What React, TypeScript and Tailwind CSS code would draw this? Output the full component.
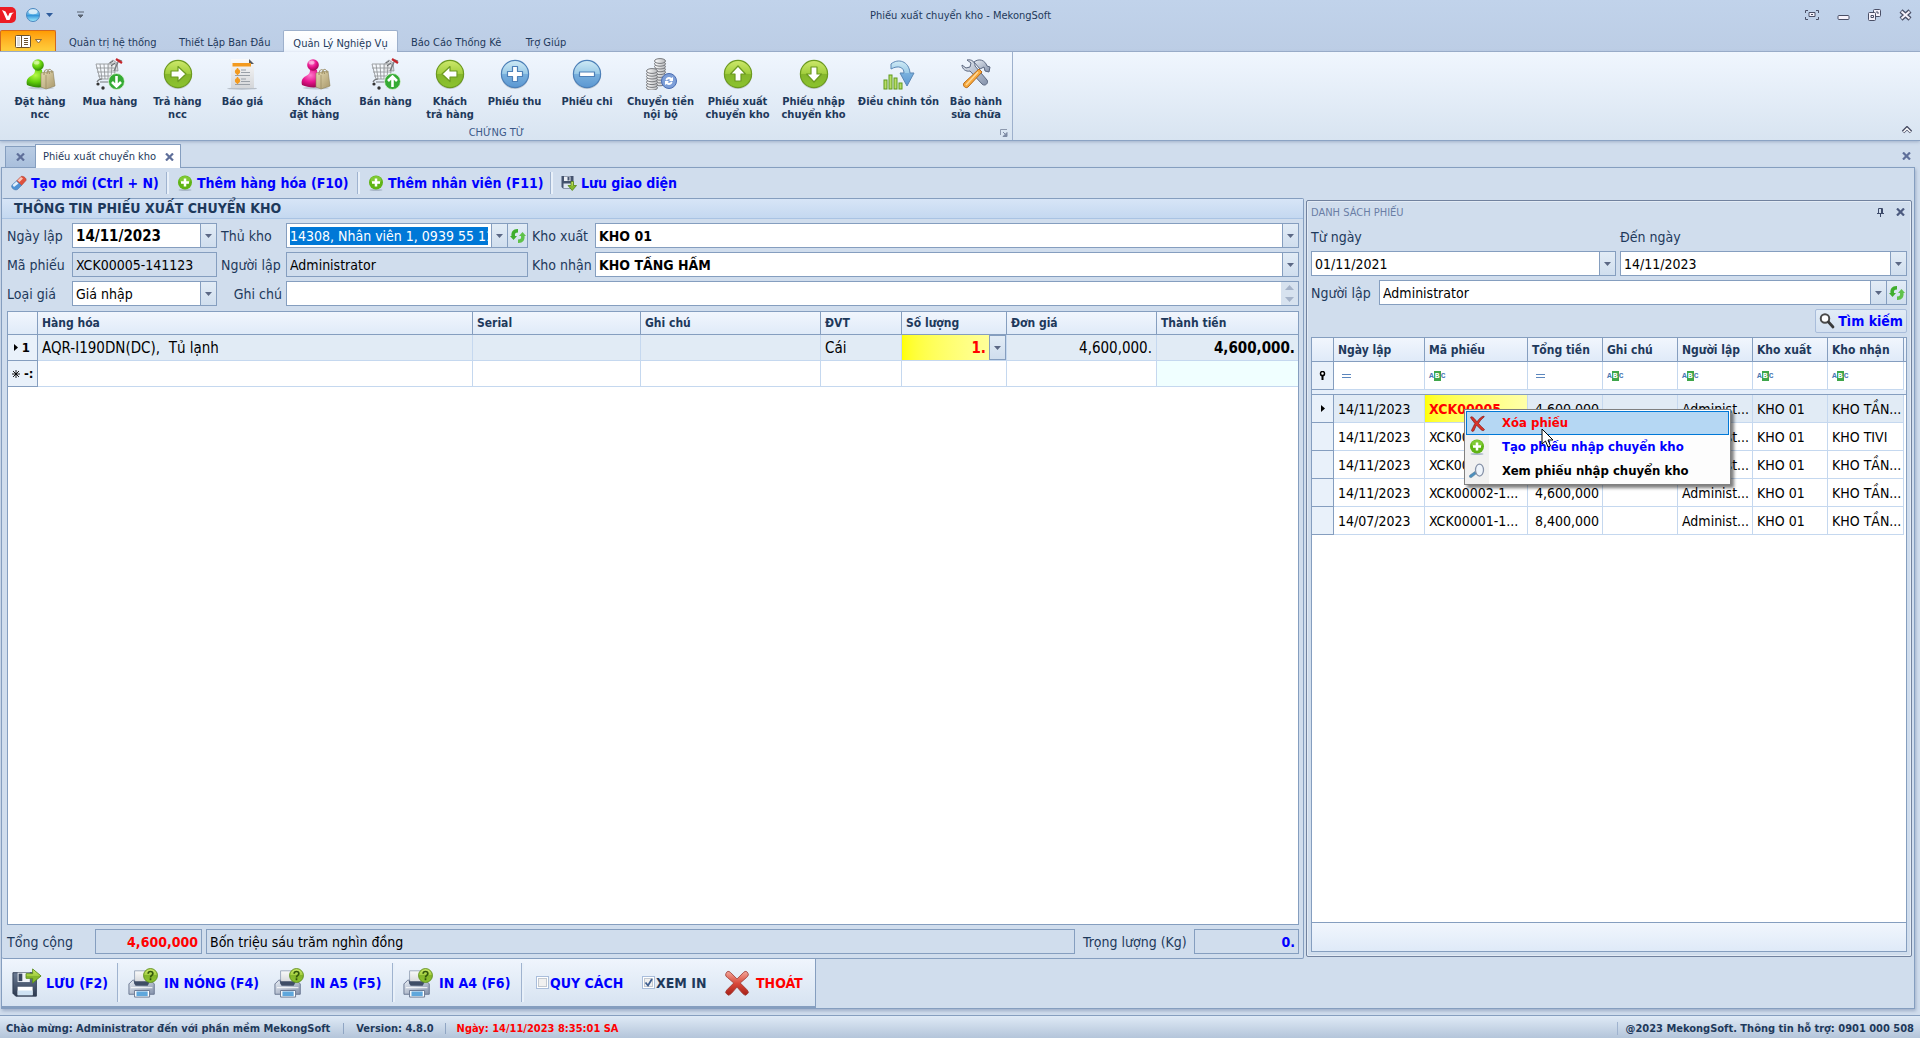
import type { ReactNode } from 'react';

const small = 'text-[11px] leading-[13px]';

function Defs() {
  return (
    <svg className="absolute h-0 w-0" aria-hidden="true">
      <defs>
        <linearGradient id="green" x1="0" y1="0" x2="0" y2="1">
          <stop offset="0" stopColor="#cde86b" /><stop offset=".48" stopColor="#a3cf3f" />
          <stop offset=".5" stopColor="#84b52b" /><stop offset="1" stopColor="#8cc42e" />
        </linearGradient>
        <linearGradient id="blue" x1="0" y1="0" x2="0" y2="1">
          <stop offset="0" stopColor="#cfeaf5" /><stop offset=".48" stopColor="#9bcbe8" />
          <stop offset=".5" stopColor="#79b0dd" /><stop offset="1" stopColor="#5b97d2" />
        </linearGradient>
        <radialGradient id="lime" cx=".4" cy=".3" r=".8">
          <stop offset="0" stopColor="#b9f94a" /><stop offset=".5" stopColor="#62cf0c" /><stop offset="1" stopColor="#1f6d05" />
        </radialGradient>
        <radialGradient id="pink" cx=".4" cy=".3" r=".8">
          <stop offset="0" stopColor="#ff7ccb" /><stop offset=".5" stopColor="#e6128c" /><stop offset="1" stopColor="#86043f" />
        </radialGradient>
        <linearGradient id="bag" x1="0" y1="0" x2="1" y2="1">
          <stop offset="0" stopColor="#e6dcb4" /><stop offset="1" stopColor="#a8976a" />
        </linearGradient>
        <linearGradient id="ball" x1="0" y1="0" x2="0" y2="1">
          <stop offset="0" stopColor="#9cc9ea" /><stop offset=".45" stopColor="#5fb4e6" />
          <stop offset=".5" stopColor="#2d8fd8" /><stop offset="1" stopColor="#a6f0ff" />
        </linearGradient>
        <linearGradient id="steel" x1="0" y1="0" x2="1" y2="1">
          <stop offset="0" stopColor="#e8edf4" /><stop offset="1" stopColor="#8492ab" />
        </linearGradient>
        <linearGradient id="dark" x1="0" y1="0" x2="0" y2="1">
          <stop offset="0" stopColor="#6c7c95" /><stop offset="1" stopColor="#2d3a50" />
        </linearGradient>
        <linearGradient id="coin" x1="0" y1="0" x2="1" y2="0">
          <stop offset="0" stopColor="#fff" /><stop offset="1" stopColor="#b7b9bc" />
        </linearGradient>
        <linearGradient id="red" x1="0" y1="0" x2="0" y2="1">
          <stop offset="0" stopColor="#f3a79b" /><stop offset=".5" stopColor="#d9493a" /><stop offset="1" stopColor="#a82018" />
        </linearGradient>
        <linearGradient id="paper" x1="0" y1="0" x2="0" y2="1">
          <stop offset="0" stopColor="#fafafa" /><stop offset="1" stopColor="#d4d6d9" />
        </linearGradient>
      </defs>
    </svg>
  );
}

function Svg({ size = 32, children }: { size?: number; children: ReactNode }) {
  return <svg width={size} height={size} viewBox="0 0 32 32" className="shrink-0" aria-hidden="true">{children}</svg>;
}

function PersonBag({ fill }: { fill: string }) {
  return (
    <Svg>
      <ellipse cx="17" cy="30" rx="13" ry="1.500" fill="#8c96a3" opacity=".4" />
      <path d="M3 27c-1-4 0-7 4-9 3-2 4-3 4-6h7c0 3 1 4 3 6 4 2 4 6 3 10-6 2-15 2-21-1z" fill={fill} />
      <circle cx="14" cy="7" r="5.800" fill={fill} />
      <ellipse cx="12.500" cy="4.500" rx="3" ry="2" fill="#fff" opacity=".45" />
      <path d="M17 15l12-2 2 15-9 3-5-2z" fill="url(#bag)" stroke="#8f8158" strokeWidth=".6" />
      <path d="M20 17c-.5-7 5-7 5.500-1M23 16c0-6 5-6 5-1" fill="none" stroke="#9b8d63" strokeWidth="1" />
      <path d="M22 17v13.500" stroke="#8f8158" strokeWidth=".6" />
    </Svg>
  );
}

function Cart({ up }: { up?: boolean }) {
  return (
    <Svg>
      <path d="M14 12l1-7 4-3 4 3 1 8z" fill="#d5d7da" stroke="#8f9296" strokeWidth=".8" />
      <path d="M2 6h20l-2 15H6z" fill="#fff" opacity=".5" />
      <path d="M2 6h20l-2 15H6zM2 10h20M3 14h18M4 18h17M6 6l2 15M10 6l1 15M14 6v15M18 6l-1 15" fill="none" stroke="#94979b" strokeWidth=".9" />
      <path d="M20 13l5-11 3 1M6 24h14M3 24c1-2 3-3 5-3" fill="none" stroke="#75787c" strokeWidth="1.200" />
      <path d="M22 1l6 4" stroke="#c6242a" strokeWidth="2.200" />
      <path d="M16 5l3-2M17 8l4-3" stroke="#5f6266" strokeWidth="1" />
      <circle cx="4" cy="26" r="1.600" fill="#333" /><circle cx="9" cy="30" r="1.700" fill="#333" />
      <circle cx="22.500" cy="23.500" r="8" fill="#35ab34" stroke="#dff2da" strokeWidth=".8" />
      <path d={up ? 'M22.500 29v-10M18 23l4.500-4.500L27 23' : 'M22.500 18v10M18 24l4.500 4.500L27 24'} fill="none" stroke="#fff" strokeWidth="2.600" />
    </Svg>
  );
}

function RoundIcon({ fill, edge, path }: { fill: string; edge: string; path: string }) {
  return (
    <Svg>
      <circle cx="16" cy="17" r="14" fill="#000" opacity=".15" />
      <circle cx="16" cy="16" r="13.600" fill={fill} stroke={edge} strokeWidth="1.200" />
      <path d={path} fill="#fff" stroke={edge} strokeWidth="1.200" strokeLinejoin="round" />
    </Svg>
  );
}

const arrowRight = 'M9 13h7V8.500l8 7.500-8 7.500V19H9z';
const arrowLeft = 'M23 13h-7V8.500L8 16l8 7.500V19h7z';
const arrowUp = 'M13 23v-7H8.500L16 8l7.500 8H19v7z';
const arrowDown = 'M13 9v7H8.500l7.500 8 7.500-8H19V9z';
const plusPath = 'M13.500 8.500h5v5h5v5h-5v5h-5v-5h-5v-5h5z';
const minusPath = 'M8.500 14h15v4.500h-15z';

function QuoteIcon() {
  return (
    <Svg>
      <ellipse cx="15" cy="30.500" rx="15" ry="1.200" fill="#9aa0a8" opacity=".6" />
      <path d="M4 1h18l5 5v24H4z" fill="url(#paper)" />
      <path d="M22 1l5 5h-5z" fill="#545a63" />
      <path d="M5.500 5h18.500v3.500H5.500z" fill="#f39a1f" />
      <path d="M10.500 10v7M10.500 19v7" stroke="#f39a1f" strokeWidth="1.500" />
      <circle cx="10.500" cy="13.500" r="2.600" fill="#f39a1f" /><circle cx="10.500" cy="22.500" r="2.600" fill="#f39a1f" />
      <path d="M14 12h5M14 14.500h9M8 17.500h15M14 21h5M14 23.500h9M8 26.500h15" stroke="#9aa0a7" strokeWidth="1" />
    </Svg>
  );
}

function CoinsIcon() {
  const stack = (x: number, top: number, n: number) =>
    Array.from({ length: n }, (_, i) => (
      <ellipse key={`${x}-${i}`} cx={x} cy={top + (n - 1 - i) * 2.800} rx="5.500" ry="2.400" fill="url(#coin)" stroke="#77797d" strokeWidth="1" />
    ));
  return (
    <Svg>
      {stack(15, 3, 9)}
      {stack(7, 13, 7)}
      <circle cx="24" cy="23" r="7.500" fill="#7d9fd8" stroke="#4a6db2" strokeWidth="1" />
      <path d="M20.500 22c.5-3 4-4 6-2l1.500-1v4h-4l1.300-1.300c-1.300-1-2.800-.5-3.300.8zM27.500 24c-.5 3-4 4-6 2L20 27v-4h4l-1.300 1.300c1.300 1 2.800.5 3.300-.8z" fill="#fff" />
    </Svg>
  );
}

function AdjustIcon() {
  return (
    <Svg>
      {[[1, 22, 9], [6, 17, 14], [11, 20, 11], [16, 25, 6]].map(([x, y, h]) => (
        <rect key={x} x={x} y={y} width="3" height={h} fill="#b9dd66" stroke="#5f9a1c" strokeWidth="1" />
      ))}
      <path d="M8 6c7-6 18-3 19 9h4l-7 13-7-13h4c0-6-6-8-13-4z" fill="url(#blue)" stroke="#5b87b5" strokeWidth="1" />
    </Svg>
  );
}

function ToolsIcon() {
  return (
    <Svg>
      <path d="M2 7l4 3 4-1 1-4-4-3c5-1 8 2 8 6l12 14c2 3-2 7-5 4L10 13C6 14 2 11 2 7z" fill="url(#steel)" stroke="#5b6780" strokeWidth="1" />
      <path d="M14 4c5-4 11-2 13 4l3 1-1 5-4-1-1-4-4 2z" fill="url(#steel)" stroke="#5b6780" strokeWidth="1" />
      <path d="M19 11l3 3L8 29c-2 2-6-1-4-4z" fill="#f7a83b" stroke="#b86b1a" strokeWidth="1" />
      <path d="M18 14L6 27" stroke="#fdd89a" strokeWidth="1.500" />
    </Svg>
  );
}

function DiskIcon() {
  return (
    <Svg size={30}>
      <path d="M1 5h22l3 3v22H4l-3-3z" fill="url(#dark)" stroke="#303d54" strokeWidth="1" />
      <path d="M6 5h13v10H6z" fill="#eef2f7" /><path d="M7 6h4v8H7z" fill="#3b4961" />
      <path d="M6 20h16v9H6z" fill="#fff" /><path d="M6 24h16v5H6z" fill="#cfe2f3" />
      <path d="M15 6h7V1l9 7.500-9 7.500v-5h-7z" fill="url(#green)" stroke="#5d8e1c" strokeWidth="1" />
    </Svg>
  );
}

function PrinterIcon() {
  return (
    <Svg size={30}>
      <path d="M7 3h14v13H7z" fill="url(#paper)" stroke="#9aa6ba" strokeWidth="1" />
      <path d="M5 13h2v4h15v-4h2l4 4v11H1V17z" fill="url(#steel)" stroke="#66748f" strokeWidth="1" strokeLinejoin="round" />
      <path d="M6 14h17l-2 5H8z" fill="#3f4d66" />
      <path d="M3 21h23" stroke="#fff" strokeWidth="1" />
      <path d="M7 24h16v7H7z" fill="#fff" stroke="#66748f" strokeWidth="1" /><path d="M9 25h12v5H9z" fill="#5fa7dc" />
      <circle cx="24" cy="8" r="7.400" fill="url(#green)" stroke="#5d8e1c" strokeWidth="1" />
      <path d="M21.500 6c0-3 5-3 5 0 0 2-2.500 1.800-2.500 4M24 11v2" fill="none" stroke="#31560b" strokeWidth="1.800" />
    </Svg>
  );
}

function ExitIcon() {
  return (
    <Svg size={26}>
      <path d="M2 6q0-2 2-4 2-1 4 1l8 8 8-8q2-2 4-1 2 2 2 4-1 2-2 3l-8 7 8 8q2 2 2 4l-3 3q-2 0-4-2l-7-8-7 8q-2 2-4 2l-3-3q0-2 2-4l8-8-8-7q-2-1-2-3z" fill="url(#red)" stroke="#9c3830" strokeWidth="1" strokeLinejoin="round" />
    </Svg>
  );
}

function AddIcon() {
  return (
    <Svg size={16}>
      <ellipse cx="16" cy="30" rx="13" ry="2" fill="#aab7c8" />
      <circle cx="16" cy="15" r="14" fill="#5fb414" /><ellipse cx="16" cy="10" rx="11" ry="8" fill="#96d94a" opacity=".6" />
      <path d="M13.500 7h5v5.500H24v5h-5.500V23h-5v-5.500H8v-5h5.500z" fill="#fff" />
    </Svg>
  );
}

function EraserIcon() {
  return (
    <Svg size={16}>
      <path d="M11 12L20 3c3-2 12 3 10 8l-9 10z" fill="#e0513c" stroke="#a2382b" />
      <path d="M2 20l9-8 10 9-8 8c-6 3-14-3-11-9z" fill="#4f93d6" stroke="#3d6ea5" />
      <path d="M3 20l8-7 4 4-9 7z" fill="#e3f0fb" /><path d="M13 11l7-7 4 3-7 7z" fill="#f9c5b8" />
    </Svg>
  );
}

function SaveLayoutIcon() {
  return (
    <Svg size={16}>
      <path d="M1 2h24v25H4l-3-3z" fill="#44536e" /><path d="M6 3h13v9H6z" fill="#e9eef5" /><path d="M13 4h4v7h-4z" fill="#44536e" />
      <path d="M5 17h17v9H5z" fill="#dfe8f3" />
      <path d="M20 13h5v8h6l-8.500 10L14 21h6z" fill="url(#green)" stroke="#4e7d12" strokeWidth="1.500" />
    </Svg>
  );
}

function RefreshIcon() {
  return (
    <Svg size={16}>
      <path d="M15 2C6 2 2 8 3 16H0l7 8 7-8h-4c-1-5 1-7 6-7V2z" fill="#3fae2e" />
      <path d="M17 30c9 0 13-6 12-14h3l-7-8-7 8h4c1 5-1 7-6 7v7z" fill="#5fc24a" />
    </Svg>
  );
}

function SearchIcon() {
  return (
    <Svg size={16}>
      <circle cx="12" cy="11" r="8.500" fill="#fff" stroke="#4a4a4a" strokeWidth="4" />
      <path d="M19 18l9 10" stroke="#3a3a3a" strokeWidth="5.500" strokeLinecap="round" />
    </Svg>
  );
}

function Cross({ className = 'text-[#5f6f9a]' }: { className?: string }) {
  return (
    <svg width="9" height="8" viewBox="0 0 9 8" className={className} aria-hidden="true">
      <path d="M1 .5l7 7M8 .5l-7 7" stroke="currentColor" strokeWidth="2.200" />
    </svg>
  );
}

function Caret({ className = 'text-[#5b6885]' }: { className?: string }) {
  return <svg width="7" height="4" viewBox="0 0 7 4" className={className} aria-hidden="true"><path d="M0 0h7L3.500 4z" fill="currentColor" /></svg>;
}

function CaretButton({ label }: { label: string }) {
  return (
    <button type="button" aria-label={label} className="flex w-4 shrink-0 items-center justify-center self-stretch border-l border-[#859ebf] bg-linear-to-b from-[#e2ecf6] to-[#d0deee]">
      <Caret />
    </button>
  );
}

function TextField({ id, value, textClass = '', dropdown, readOnly, className = '' }: { id: string; value: string; textClass?: string; dropdown?: boolean; readOnly?: boolean; className?: string }) {
  return (
    <div className={`flex h-[25px] min-w-0 items-center border border-[#859ebf] ${readOnly ? 'bg-[#d0dded]' : 'bg-white'} ${className}`}>
      <input id={id} defaultValue={value} readOnly={readOnly} className={`h-full w-full min-w-0 bg-transparent px-[3px] text-black outline-none ${textClass}`} />
      {dropdown && <CaretButton label="Mở danh sách" />}
    </div>
  );
}

function SelectField({ id, value, bold, className = '' }: { id: string; value: string; bold?: boolean; className?: string }) {
  return (
    <div className={`relative h-[25px] min-w-0 border border-[#859ebf] bg-white ${className}`}>
      <select id={id} defaultValue={value} className={`h-full w-full appearance-none bg-transparent px-[3px] text-black outline-none ${bold ? 'font-bold' : ''}`}>
        <option>{value}</option>
      </select>
      <span className="pointer-events-none absolute inset-y-0 right-0 flex w-4 items-center justify-center border-l border-[#859ebf] bg-linear-to-b from-[#e2ecf6] to-[#d0deee]"><Caret /></span>
    </div>
  );
}

function RefreshButton() {
  return (
    <button type="button" aria-label="Làm mới" className="flex w-5 shrink-0 items-center justify-center self-stretch border-l border-[#859ebf] bg-linear-to-b from-[#e2ecf6] to-[#d0deee]">
      <RefreshIcon />
    </button>
  );
}

function TitleBar() {
  return (
    <header className={`flex h-[30px] items-center text-[#1e395b] ${small}`}>
      <svg width="16" height="16" viewBox="0 0 16 16" aria-hidden="true">
        <path d="M0 0h11a5 5 0 0 1 5 5v6a5 5 0 0 1-5 5H0z" fill="#ec1c24" />
        <path d="M2 3l3.500 1.500L8 9.500 9.500 6l4.500-.5-2 1.500-2.500 6H6.500L3.500 6z" fill="#fff" />
      </svg>
      <button type="button" aria-label="Giao diện" className="ml-[10px] flex items-center gap-[6px]">
        <svg width="14" height="14" viewBox="0 0 14 14"><circle cx="7" cy="7" r="6.500" fill="url(#ball)" stroke="#4b87bf" /><ellipse cx="7" cy="3.800" rx="4.500" ry="2.500" fill="#fff" opacity=".7" /></svg>
        <Caret className="text-[#2f5c9c]" />
      </button>
      <button type="button" aria-label="Tùy chỉnh thanh công cụ" className="ml-6">
        <svg width="7" height="8" viewBox="0 0 7 8"><path d="M0 1h7M1 4h5L3.500 6.500z" fill="#5b6472" stroke="#5b6472" strokeWidth="1" /></svg>
      </button>
      <h1 className="flex-1 pl-8 text-center">Phiếu xuất chuyển kho - MekongSoft</h1>
      <div className="mr-2 flex items-center gap-[18px] text-[#4a4f66]">
        <button type="button" aria-label="Toàn màn hình"><svg width="14" height="10" viewBox="0 0 14 10" fill="none" stroke="currentColor"><path d="M.5 3V.5H3M11 .5h2.500V3M13.500 7v2.500H11M3 9.500H.5V7" /><path d="M4 2.500h6v4H4z" fill="#f6f2fb" /><path d="M6 4.500h2" /></svg></button>
        <button type="button" aria-label="Thu nhỏ"><svg width="13" height="12" viewBox="0 0 13 12"><rect x="1" y="6.500" width="11" height="4" rx="1" fill="#f6f2fb" stroke="currentColor" /></svg></button>
        <button type="button" aria-label="Khôi phục"><svg width="13" height="12" viewBox="0 0 13 12" fill="#f6f2fb" stroke="currentColor"><rect x="5.500" y=".5" width="7" height="7" rx="1" /><path d="M8 3h2v2" fill="none" /><rect x=".5" y="3.500" width="7" height="8" rx="1" /><path d="M3 6.500h2.500v2H3z" /></svg></button>
        <button type="button" aria-label="Đóng"><svg width="13" height="12" viewBox="0 0 13 12"><path d="M2 2l9 8M11 2l-9 8" stroke="currentColor" strokeWidth="4.500" /><path d="M2.500 2.500l8 7M10.500 2.500l-8 7" stroke="#f6f2fb" strokeWidth="2" /></svg></button>
      </div>
    </header>
  );
}

function RibbonTabs() {
  const tab = 'whitespace-nowrap pt-[3px]';
  return (
    <nav className={`flex h-[22px] items-stretch border-b border-[#9db0cc] text-[#1e395b] ${small}`}>
      <button type="button" aria-label="Menu chính" className="flex w-14 items-center justify-center gap-1 rounded-t-xs border border-b-0 border-[#d2691e] bg-linear-to-b from-[#ff9c00] to-[#ffcf3c]">
        <svg width="16" height="13" viewBox="0 0 16 13"><rect x=".5" y=".5" width="15" height="12" rx="1" fill="#fff" stroke="#6b5330" /><path d="M6.500 1v11M9 3.500h4M9 5.500h4M9 7.500h4M9 9.500h4" stroke="#6b5330" /><path d="M2 2h3v9H2z" fill="#ddd" /></svg>
        <svg width="7" height="5" viewBox="0 0 7 5"><path d="M.5.500h6L3.500 4z" fill="#fff" stroke="#6b5330" strokeWidth=".8" /></svg>
      </button>
      <button type="button" className={`ml-[13px] w-[86px] ${tab}`}>Quản trị hệ thống</button>
      <button type="button" className={`ml-[24px] w-[90px] ${tab}`}>Thiết Lập Ban Đầu</button>
      <button type="button" className={`-mb-px ml-[14px] w-[115px] rounded-t-xs border border-b-0 border-[#9db0cc] bg-linear-to-b from-white to-[#f0f6fe] ${tab}`}>Quản Lý Nghiệp Vụ</button>
      <button type="button" className={`ml-[13px] w-[90px] ${tab}`}>Báo Cáo Thống Kê</button>
      <button type="button" className={`ml-6 w-[42px] ${tab}`}>Trợ Giúp</button>
    </nav>
  );
}

const ribbonItems: { w: string; lines: string[]; icon: ReactNode }[] = [
  { w: 'w-[66px]', lines: ['Đặt hàng', 'ncc'], icon: <PersonBag fill="url(#lime)" /> },
  { w: 'w-[74px]', lines: ['Mua hàng'], icon: <Cart /> },
  { w: 'w-[61px]', lines: ['Trả hàng', 'ncc'], icon: <RoundIcon fill="url(#green)" edge="#6c9a20" path={arrowRight} /> },
  { w: 'w-[69px]', lines: ['Báo giá'], icon: <QuoteIcon /> },
  { w: 'w-[75px]', lines: ['Khách', 'đặt hàng'], icon: <PersonBag fill="url(#pink)" /> },
  { w: 'w-[67px]', lines: ['Bán hàng'], icon: <Cart up /> },
  { w: 'w-[62px]', lines: ['Khách', 'trả hàng'], icon: <RoundIcon fill="url(#green)" edge="#6c9a20" path={arrowLeft} /> },
  { w: 'w-[67px]', lines: ['Phiếu thu'], icon: <RoundIcon fill="url(#blue)" edge="#4d80b8" path={plusPath} /> },
  { w: 'w-[78px]', lines: ['Phiếu chi'], icon: <RoundIcon fill="url(#blue)" edge="#4d80b8" path={minusPath} /> },
  { w: 'w-[69px]', lines: ['Chuyển tiền', 'nội bộ'], icon: <CoinsIcon /> },
  { w: 'w-[85px]', lines: ['Phiếu xuất', 'chuyển kho'], icon: <RoundIcon fill="url(#green)" edge="#6c9a20" path={arrowUp} /> },
  { w: 'w-[67px]', lines: ['Phiếu nhập', 'chuyển kho'], icon: <RoundIcon fill="url(#green)" edge="#6c9a20" path={arrowDown} /> },
  { w: 'w-[103px]', lines: ['Điều chỉnh tồn'], icon: <AdjustIcon /> },
  { w: 'w-[52px]', lines: ['Bảo hành', 'sửa chữa'], icon: <ToolsIcon /> },
];

function Ribbon() {
  return (
    <section className="flex h-[89px] justify-between border-b border-[#8ba3c4] bg-linear-to-b from-[#f0f6fe] to-[#d8e4f1] shadow-[0_1px_3px_rgba(90,110,150,.4)]">
      <div className="flex w-[1013px] shrink-0 flex-col border-r border-[#9db0cc] pl-[7px] pt-[6px]">
        <div className="flex h-[68px]">
          {ribbonItems.map((item) => (
            <button key={item.lines.join(' ')} type="button" className={`flex shrink-0 flex-col items-center whitespace-nowrap font-bold text-[#1e395b] ${small} ${item.w}`}>
              {item.icon}
              <span className="mt-[5px]">{item.lines[0]}</span>
              <span>{item.lines[1]}</span>
            </button>
          ))}
        </div>
        <div className={`flex items-center text-[#3b5888] ${small}`}>
          <span className="flex-1 pr-[14px] text-center">CHỨNG TỪ</span>
          <button type="button" aria-label="Tùy chọn nhóm" className="mr-1">
            <svg width="8" height="8" viewBox="0 0 8 8"><path d="M.5 6V.5H7" fill="none" stroke="#8d99ae" /><path d="M3 3l2 2M7 3.500v4H3z" fill="#7d8aa3" stroke="#7d8aa3" /></svg>
          </button>
        </div>
      </div>
      <button type="button" aria-label="Thu gọn" className="mb-[6px] mr-2 self-end">
        <svg width="10" height="8" viewBox="0 0 10 8"><path d="M1 6l4-4 4 4" fill="none" stroke="#4a4f66" strokeWidth="3.500" /><path d="M1.500 6L5 2.500 8.500 6" fill="none" stroke="#fff" strokeWidth="1.500" /></svg>
      </button>
    </section>
  );
}

function DocumentTabs() {
  return (
    <div className={`relative z-10 -mb-px flex items-end justify-between pl-[5px] pr-[9px] pt-[3px] text-[#1e395b] ${small}`}>
      <div className="flex items-end">
        <button type="button" aria-label="Đóng thẻ" className="flex h-[22px] w-[31px] items-center justify-center border border-[#859ebf] bg-linear-to-b from-[#b9cce4] to-[#a9bfdc]"><Cross /></button>
        <div className="-ml-px flex h-6 w-[146px] items-center justify-between border border-b-0 border-[#859ebf] bg-white pl-[7px] pr-[6px]">
          <span className="whitespace-nowrap">Phiếu xuất chuyển kho</span>
          <button type="button" aria-label="Đóng Phiếu xuất chuyển kho"><Cross /></button>
        </div>
      </div>
      <button type="button" aria-label="Đóng trang" className="mb-2"><Cross /></button>
    </div>
  );
}

function Separator() {
  return <span className="w-[3px] shrink-0 self-stretch border-l border-[#9fb3cf] bg-[#e8f0f9]" />;
}

function PageToolbar() {
  const link = 'flex items-center gap-1 whitespace-nowrap font-bold text-[#0000ff]';
  return (
    <div className="flex h-[30px] items-stretch py-1 pl-[9px]">
      <button type="button" className={`w-[155px] ${link}`}><EraserIcon />Tạo mới (Ctrl + N)</button>
      <Separator />
      <button type="button" className={`w-[188px] pl-2 ${link}`}><AddIcon />Thêm hàng hóa (F10)</button>
      <Separator />
      <button type="button" className={`w-[190px] pl-2 ${link}`}><AddIcon />Thêm nhân viên (F11)</button>
      <Separator />
      <button type="button" className={`pl-2 ${link}`}><SaveLayoutIcon />Lưu giao diện</button>
    </div>
  );
}

function VoucherForm() {
  return (
    <form className="grid grid-cols-[65px_145px_69px_242px_67px_minmax(0,1fr)] items-center gap-y-1 pb-[5px] pl-[5px] pr-1 pt-1">
      <label htmlFor="date">Ngày lập</label>
      <TextField id="date" value="14/11/2023" textClass="text-[15px] font-bold" dropdown />
      <label htmlFor="keeper" className="pl-1">Thủ kho</label>
      <div className="flex h-[25px] min-w-0 items-center border border-[#859ebf] bg-white">
        <div className="min-w-0 flex-1 px-[3px]">
          <input id="keeper" defaultValue="14308, Nhân viên 1, 0939 55 11" className="block h-[18px] w-full bg-[#0078d7] text-white outline-none" />
        </div>
        <CaretButton label="Chọn thủ kho" />
        <RefreshButton />
      </div>
      <label htmlFor="from" className="pl-1">Kho xuất</label>
      <SelectField id="from" value="KHO 01" bold />

      <label htmlFor="code">Mã phiếu</label>
      <TextField id="code" value="XCK00005-141123" readOnly />
      <label htmlFor="author" className="pl-1">Người lập</label>
      <TextField id="author" value="Administrator" readOnly />
      <label htmlFor="to" className="pl-1">Kho nhận</label>
      <SelectField id="to" value="KHO TẦNG HẦM" bold />

      <label htmlFor="price">Loại giá</label>
      <SelectField id="price" value="Giá nhập" />
      <label htmlFor="note" className="pr-1 text-right">Ghi chú</label>
      <div className="col-span-3 flex h-[25px] border border-[#859ebf] bg-white">
        <textarea id="note" rows={1} className="h-full flex-1 resize-none px-[3px] outline-none" />
        <span className="flex w-[17px] flex-col items-center justify-between bg-[#d7e2ef] py-[3px] text-[#a5b3c9]">
          <svg width="9" height="5" viewBox="0 0 9 5" aria-hidden="true"><path d="M0 5h9L4.500 0z" fill="currentColor" /></svg>
          <svg width="9" height="5" viewBox="0 0 9 5" aria-hidden="true"><path d="M0 0h9L4.500 5z" fill="currentColor" /></svg>
        </span>
      </div>
    </form>
  );
}

function ItemsGrid() {
  const heads = ['', 'Hàng hóa', 'Serial', 'Ghi chú', 'ĐVT', 'Số lượng', 'Đơn giá', 'Thành tiền'];
  const cell = 'border-b border-r border-[#c5d8ef] px-1 py-0';
  const side = 'border-b border-r border-[#859ebf] bg-[#e9f1fa]';
  return (
    <div className="ml-[5px] mr-1 flex-1 border border-[#859ebf] bg-white">
      <table className="w-full table-fixed border-separate border-spacing-0 text-[15px] text-black">
        <colgroup>
          <col className="w-[30px]" /><col /><col className="w-[168px]" /><col className="w-[180px]" />
          <col className="w-[81px]" /><col className="w-[105px]" /><col className="w-[150px]" /><col className="w-[141px]" />
        </colgroup>
        <thead>
          <tr className="h-[23px] bg-linear-to-b from-[#f1f6fd] to-[#dfeaf8] text-left text-[12px] text-[#1e395b]">
            {heads.map((h, i) => <th key={i} className={`border-b border-[#859ebf] px-1 py-0 font-bold ${i < 7 ? 'border-r' : ''}`}>{h}</th>)}
          </tr>
        </thead>
        <tbody>
          <tr className="h-[26px] bg-[#e1ebf5]">
            <td className={side}>
              <span className="flex items-center justify-end gap-1 pr-[7px] text-[13px] font-bold">
                <svg width="4" height="7" viewBox="0 0 4 7" aria-hidden="true"><path d="M0 0l4 3.500L0 7z" /></svg>1
              </span>
            </td>
            <td className={`${cell} whitespace-pre`}>AQR-I190DN(DC),  Tủ lạnh</td><td className={cell} /><td className={cell} />
            <td className={cell}>Cái</td>
            <td className="border-b border-r border-[#c5d8ef] p-0">
              <div className="flex h-[25px]">
                <input aria-label="Số lượng" defaultValue="1." className="min-w-0 flex-1 bg-linear-to-r from-[#ffff00] to-[#ffff99] px-[3px] text-right font-bold text-[#ff0000] outline-none" />
                <button type="button" aria-label="Chọn số lượng" className="flex w-[17px] items-center justify-center border border-[#859ebf] bg-linear-to-b from-[#e2ecf6] to-[#d0deee]"><Caret /></button>
              </div>
            </td>
            <td className={`${cell} text-right`}>4,600,000.</td>
            <td className="border-b border-[#c5d8ef] px-[3px] py-0 text-right font-bold">4,600,000.</td>
          </tr>
          <tr className="h-[26px]">
            <td className={side}>
              <span className="flex items-center gap-1 overflow-hidden pl-1 text-[13px] font-bold leading-4">
                <svg width="8" height="8" viewBox="0 0 8 8" aria-hidden="true"><path d="M4 0v8M0 4h8M1 1l6 6M7 1L1 7" stroke="#000" strokeWidth=".9" /></svg>-:
              </span>
            </td>
            <td className={cell} /><td className={cell} /><td className={cell} /><td className={cell} /><td className={cell} /><td className={cell} />
            <td className="border-b border-[#c5d8ef] bg-[#f0ffff]" />
          </tr>
        </tbody>
      </table>
    </div>
  );
}

function Totals() {
  return (
    <div className="flex items-center py-1 pl-[5px] pr-1">
      <label htmlFor="total" className="w-[88px]">Tổng cộng</label>
      <div className="h-[25px] w-[107px] border border-[#859ebf]">
        <input id="total" readOnly defaultValue="4,600,000" className="h-full w-full bg-transparent px-[3px] text-right font-bold text-[#ff0000] outline-none" />
      </div>
      <TextField id="words" value="Bốn triệu sáu trăm nghìn đồng" readOnly className="ml-1 flex-1" />
      <label htmlFor="weight" className="w-[119px] whitespace-nowrap pl-2">Trọng lượng (Kg)</label>
      <div className="h-[25px] w-[105px] border border-[#859ebf]">
        <input id="weight" readOnly defaultValue="0." className="h-full w-full bg-transparent px-[3px] text-right font-bold text-[#0000ff] outline-none" />
      </div>
    </div>
  );
}

function CheckItem({ id, label, checked, className }: { id: string; label: string; checked?: boolean; className: string }) {
  return (
    <div className={`flex items-center gap-px whitespace-nowrap ${className}`}>
      <span className="grid">
        <input id={id} type="checkbox" defaultChecked={checked} className="peer col-start-1 row-start-1 h-[13px] w-[13px] appearance-none border border-[#a9bddb] bg-[#f0f0f0] shadow-[inset_0_0_0_1px_#fff,inset_0_0_0_2px_#c3c9d1]" />
        <svg viewBox="0 0 13 13" className="pointer-events-none invisible col-start-1 row-start-1 h-[13px] w-[13px] peer-checked:visible" aria-hidden="true"><path d="M3.500 6.500l2.500 3L10 3" fill="none" stroke="#3f5f91" strokeWidth="1.800" /></svg>
      </span>
      <label htmlFor={id}>{label}</label>
    </div>
  );
}

function ActionBar() {
  const btn = 'flex shrink-0 items-center gap-[6px] whitespace-nowrap';
  return (
    <div className="flex w-[814px] items-stretch border-b-2 border-r border-[#859ebf] bg-linear-to-b from-[#eff5fd] to-[#d7e3f1] py-1 pl-[10px] font-bold text-[#0000ff]">
      <button type="button" className="flex w-[105px] shrink-0 items-center gap-1 whitespace-nowrap"><DiskIcon />LƯU (F2)</button>
      <Separator />
      <button type="button" className={`w-[154px] pl-2 ${btn}`}><PrinterIcon />IN NÓNG (F4)</button>
      <button type="button" className={`w-[118px] ${btn}`}><PrinterIcon />IN A5 (F5)</button>
      <Separator />
      <button type="button" className={`w-[126px] pl-2 ${btn}`}><PrinterIcon />IN A4 (F6)</button>
      <Separator />
      <CheckItem id="spec" label="QUY CÁCH" className="ml-[12px] w-[106px]" />
      <CheckItem id="preview" label="XEM IN" checked className="w-[82px] text-[#1e395b]" />
      <button type="button" className={`text-[#ff0000] ${btn}`}><ExitIcon />THOÁT</button>
    </div>
  );
}

const vouchers = [
  ['14/11/2023', 'XCK00005-', '4,600,000', 'KHO TẦN...'],
  ['14/11/2023', 'XCK00004-1...', '4,600,000', 'KHO TIVI'],
  ['14/11/2023', 'XCK00003-1...', '4,600,000', 'KHO TẦN...'],
  ['14/11/2023', 'XCK00002-1...', '4,600,000', 'KHO TẦN...'],
  ['14/07/2023', 'XCK00001-1...', '8,400,000', 'KHO TẦN...'],
];

function AbcFilter() {
  return (
    <span className="flex items-center text-[8px] font-bold leading-[10px] text-[#4a78b5] [font-family:'Liberation_Mono',monospace]">
      A<span className="bg-[#3fa64a] px-px text-white">B</span>C
    </span>
  );
}

function EqualsFilter() {
  return <span className="ml-1 block h-1 w-[9px] border-y border-[#5b86bd]" />;
}

function VoucherGrid() {
  const heads = ['Ngày lập', 'Mã phiếu', 'Tổng tiền', 'Ghi chú', 'Người lập', 'Kho xuất', 'Kho nhận'];
  const cell = 'overflow-hidden whitespace-nowrap border-b border-r border-[#c5d8ef] pl-1 pr-px py-0';
  const side = 'border-b border-r border-[#859ebf] bg-[#e9f1fa] p-0';
  return (
    <div className="flex flex-1 flex-col border border-[#859ebf] bg-white">
      <div className="flex-1">
        <table className="w-full table-fixed border-separate border-spacing-0 text-[14px] text-black">
          <colgroup>
            <col className="w-[22px]" /><col className="w-[91px]" /><col className="w-[103px]" /><col className="w-[75px]" />
            <col className="w-[75px]" /><col className="w-[75px]" /><col className="w-[75px]" /><col className="w-[76px]" /><col />
          </colgroup>
          <thead>
            <tr className="h-6 bg-linear-to-b from-[#f1f6fd] to-[#dfeaf8] text-left text-[12px] text-[#1e395b]">
              <th className="border-b border-r border-[#859ebf] p-0" />
              {heads.map((h) => <th key={h} className="overflow-hidden whitespace-nowrap border-b border-r border-[#859ebf] px-1 py-0">{h}</th>)}
              <th className="border-b border-[#859ebf] p-0" />
            </tr>
          </thead>
          <tbody>
            <tr className="h-7">
              <td className={side}>
                <svg width="7" height="9" viewBox="0 0 7 9" className="mx-auto" aria-hidden="true"><circle cx="3.500" cy="2.500" r="2" fill="#fff" stroke="#000" strokeWidth="1.500" /><path d="M1 4h5L3.500 6.500zM2.500 5h2v4h-2z" /></svg>
              </td>
              {heads.map((h, i) => <td key={h} className={cell}>{i === 0 || i === 2 ? <EqualsFilter /> : <AbcFilter />}</td>)}
              <td />
            </tr>
            <tr className="h-[5px]"><td colSpan={9} className="border-b border-[#859ebf] bg-[#e6effa] p-0" /></tr>
            {vouchers.map(([date, code, total, to], i) => (
              <tr key={code} className={`h-7 ${i === 0 ? 'bg-[#e1ebf5]' : ''}`}>
                <td className={side}>
                  {i === 0 && <svg width="4" height="7" viewBox="0 0 4 7" className="mx-auto" aria-hidden="true"><path d="M0 0l4 3.500L0 7z" /></svg>}
                </td>
                <td className={cell}>{date}</td>
                <td className={`${cell} ${i === 0 ? 'bg-linear-to-r from-[#ffff00] to-[#ffffa8] font-bold text-[#ff0000]' : ''}`}>{code}</td>
                <td className="whitespace-nowrap border-b border-r border-[#c5d8ef] py-0 pl-0 pr-[3px] text-right">{total}</td>
                <td className={cell} />
                <td className={cell}>Administ...</td>
                <td className={cell}>KHO 01</td>
                <td className={cell}>{to}</td>
                <td className="bg-white" />
              </tr>
            ))}
          </tbody>
        </table>
      </div>
      <div className="h-[29px] border-t border-[#859ebf] bg-linear-to-b from-[#f1f6fd] to-[#dfeaf8]" />
    </div>
  );
}

function ContextMenu() {
  const item = 'flex h-6 w-full items-center whitespace-nowrap border text-left';
  return (
    <div role="menu" className="absolute right-[180px] top-[208px] w-[267px] border border-[#808080] bg-linear-to-r from-[#f1f1f1] from-[24px] to-[#fdfdfd] to-[24px] p-px text-[13px] font-bold shadow-[3px_3px_3px_rgba(0,0,0,.5)]">
      <button type="button" role="menuitem" className={`${item} gap-4 border-[#0078d7] bg-[#b5d7f3] pl-[2px] text-[#ff0000]`}>
        <Svg size={17}><path d="M3 4c3-2 6 1 12 9 4-6 8-10 13-11 1 1 1 2-1 3-4 3-7 7-9 11 4 5 8 8 11 11 0 3-4 3-6 1l-9-9-5 11c-3 2-5 0-4-2l6-12C8 11 3 7 3 4z" fill="#d8342a" stroke="#7e130e" strokeWidth="1.200" /></Svg>Xóa phiếu
      </button>
      <button type="button" role="menuitem" className={`${item} gap-[17px] border-transparent pl-[2px] text-[#0000ff]`}><AddIcon />Tạo phiếu nhập chuyển kho</button>
      <button type="button" role="menuitem" className={`${item} gap-[17px] border-transparent pl-[2px] text-black`}>
        <Svg size={16}><path d="M2 24l10-7 3 4-10 8c-4 1-6-2-3-5z" fill="#4c8fbd" stroke="#53728c" /><ellipse cx="21" cy="14" rx="8" ry="12" fill="#eef4fb" stroke="#8792a8" strokeWidth="2.500" /></Svg>Xem phiếu nhập chuyển kho
      </button>
      <svg width="13" height="20" viewBox="0 0 13 20" className="pointer-events-none absolute left-[76px] top-[18px]" aria-hidden="true">
        <path d="M1 1v15l3.500-3 2.500 6 2.500-1L7 12h5z" fill="#fff" stroke="#000" />
      </svg>
    </div>
  );
}

function VoucherPanel() {
  return (
    <aside className="relative mb-[51px] ml-[2px] mr-[2px] mt-[2px] flex w-[606px] shrink-0 flex-col rounded-xs border border-[#71829f] px-1 pb-1 shadow-[inset_0_0_0_1px_#e3ebf5]">
      <div className={`flex h-[22px] items-center justify-between text-[#6a7da5] ${small}`}>
        <h2>DANH SÁCH PHIẾU</h2>
        <div className="mr-[2px] flex items-center gap-3">
          <button type="button" aria-label="Ghim"><svg width="7" height="9" viewBox="0 0 7 9"><path d="M1.500.500h4v5h-4zM0 5.500h7M3.500 6v3M4.500 1v4" fill="none" stroke="#3d4a6a" /></svg></button>
          <button type="button" aria-label="Đóng danh sách"><Cross className="text-[#4c5a7f]" /></button>
        </div>
      </div>
      <div className="mt-1 grid grid-cols-[305px_minmax(0,1fr)] gap-x-1">
        <label htmlFor="since" className="h-6 leading-5">Từ ngày</label>
        <label htmlFor="until" className="h-6 leading-5">Đến ngày</label>
        <TextField id="since" value="01/11/2021" dropdown />
        <TextField id="until" value="14/11/2023" dropdown />
      </div>
      <div className="mt-1 flex items-center">
        <label htmlFor="creator" className="w-[68px] whitespace-nowrap">Người lập</label>
        <div className="flex h-[25px] flex-1 border border-[#859ebf] bg-white">
          <input id="creator" defaultValue="Administrator" className="min-w-0 flex-1 px-[3px] text-black outline-none" />
          <CaretButton label="Chọn người lập" />
          <RefreshButton />
        </div>
      </div>
      <button type="button" className="my-1 flex h-6 items-center gap-[3px] self-end rounded-xs border border-[#a9bddb] bg-linear-to-b from-[#e2ecf6] to-[#d3e0f0] px-[3px] font-bold text-[#0000ff]"><SearchIcon />Tìm kiếm</button>
      <VoucherGrid />
      <ContextMenu />
    </aside>
  );
}

function StatusBar() {
  return (
    <footer className={`mt-[6px] flex h-[23px] items-center whitespace-nowrap border-t border-[#859ebf] bg-linear-to-b from-[#dfeaf6] to-[#b4c5da] px-[6px] pt-[2px] font-bold text-[#1e395b] ${small}`}>
      <span>Chào mừng: Administrator đến với phần mềm MekongSoft</span>
      <span className="ml-[13px] h-[11px] w-px bg-[#8fa5c3]" />
      <span className="ml-[12px]">Version: 4.8.0</span>
      <span className="ml-[11px] h-[11px] w-px bg-[#8fa5c3]" />
      <span className="ml-[11px] text-[#ff0000]">Ngày: 14/11/2023 8:35:01 SA</span>
      <span className="ml-auto border-l border-[#9fb3cf] pl-2">@2023 MekongSoft. Thông tin hỗ trợ: 0901 000 508</span>
    </footer>
  );
}

export default function App() {
  return (
    <div className="flex min-h-screen flex-col bg-[#d0dded] text-[14px] leading-[18px] text-[#1e395b] [font-family:'DejaVu_Sans_Condensed','DejaVu_Sans',sans-serif]">
      <Defs />
      <div className="bg-linear-to-b from-[#c1d3eb] to-[#bccde5]">
        <TitleBar />
        <RibbonTabs />
      </div>
      <Ribbon />
      <DocumentTabs />
      <main className="ml-px mr-[5px] flex flex-1 flex-col border border-[#859ebf] shadow-[1px_2px_3px_rgba(90,110,150,.4)]">
        <div className="flex flex-1">
          <div className="flex min-w-0 flex-1 flex-col">
            <PageToolbar />
            <section className="flex flex-1 flex-col rounded-xs border border-l-0 border-[#859ebf]">
              <h2 className="h-5 border-b border-[#a9c3e3] bg-linear-to-b from-[#d7e5f7] to-[#c4d8f0] pl-3 font-bold">THÔNG TIN PHIẾU XUẤT CHUYỂN KHO</h2>
              <VoucherForm />
              <ItemsGrid />
              <Totals />
            </section>
            <div className="flex h-[49px]"><ActionBar /></div>
          </div>
          <div className="flex pt-[30px]"><VoucherPanel /></div>
        </div>
      </main>
      <StatusBar />
    </div>
  );
}
